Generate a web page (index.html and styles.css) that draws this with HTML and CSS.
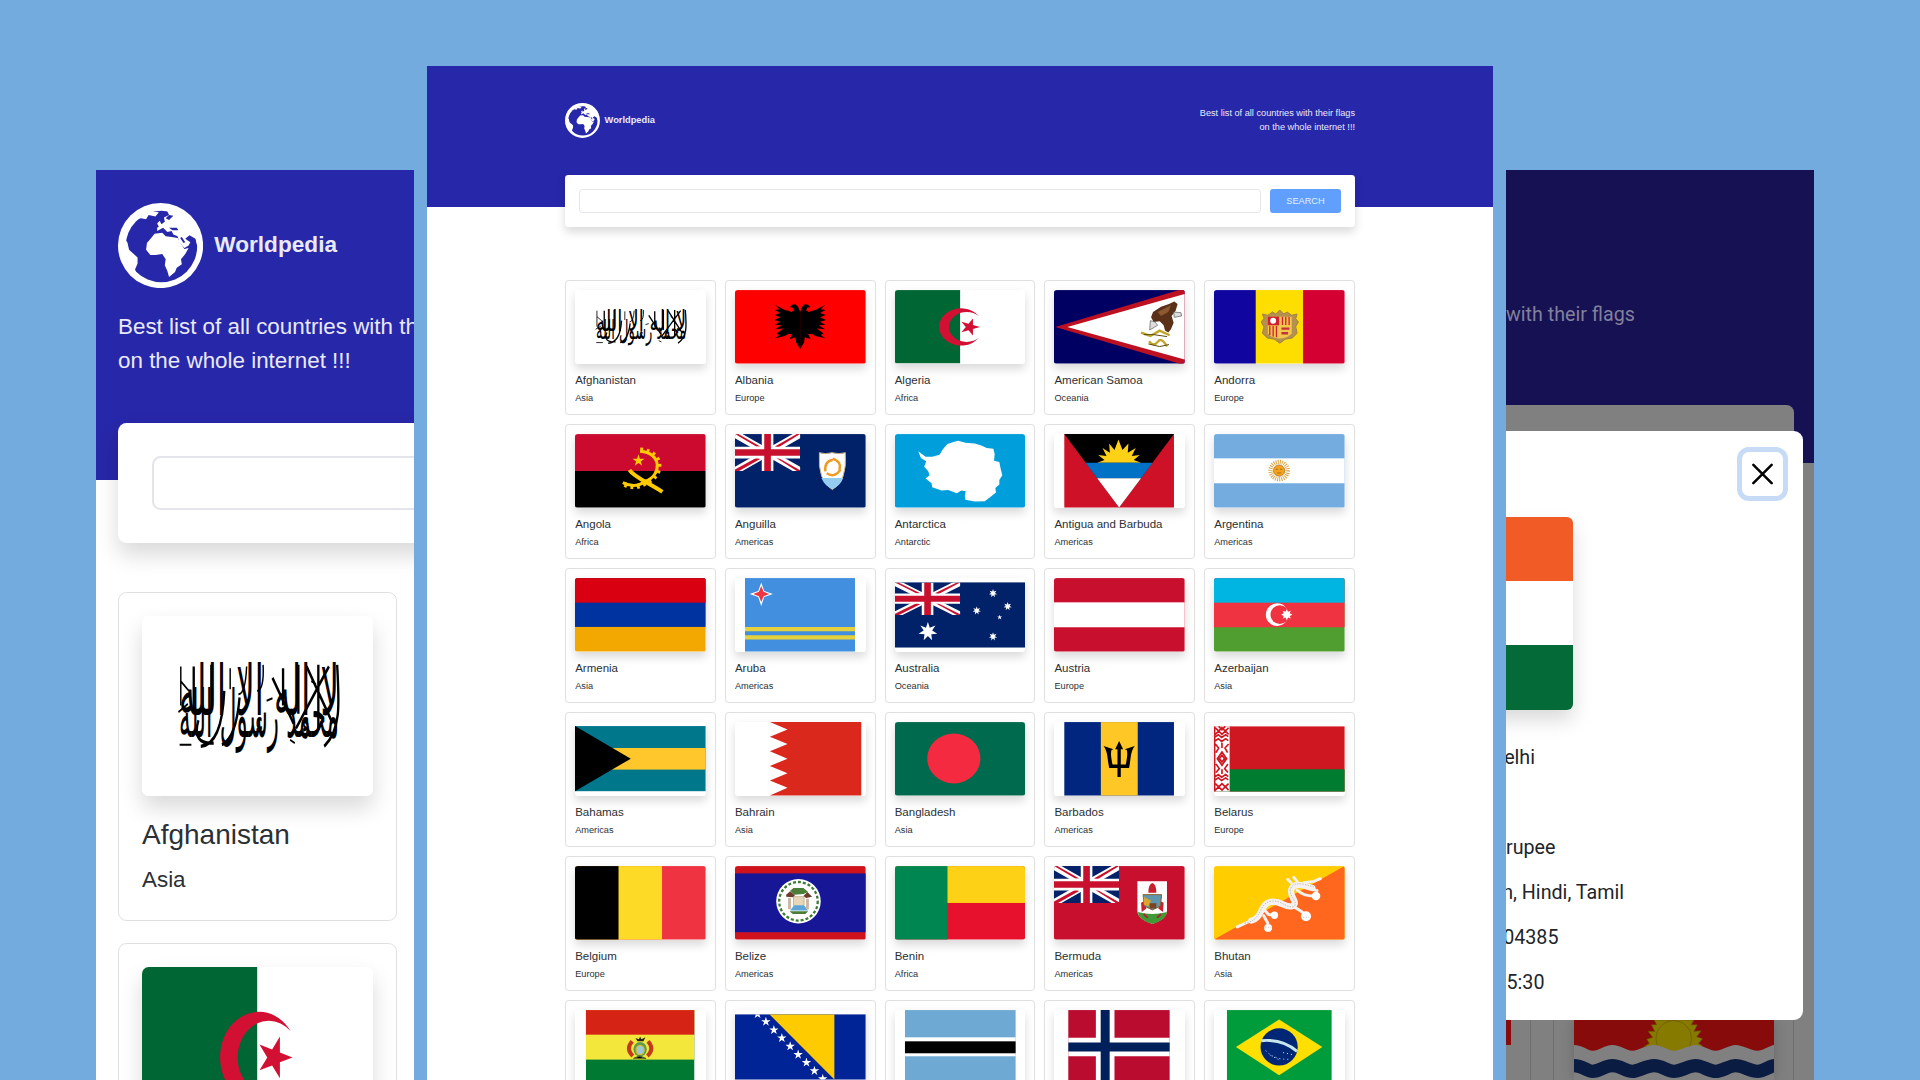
FILE: index.html
```html
<!DOCTYPE html>
<html lang="en">
<head>
<meta charset="utf-8">
<title>Worldpedia</title>
<link rel="stylesheet" href="styles.css">
</head>
<body>
<svg class="sprite" aria-hidden="true">
  <defs>
    <symbol id="globe" viewBox="0 0 100 100">
      <circle cx="50" cy="50" r="50" fill="#fff"/>
      <circle cx="51" cy="51" r="42" fill="#2727a9"/>
      <path fill="#fff" d="M5 40 L11 46 L13 55 L23 64 L23 71 L20 78 L22 84 L10 76 L2 58Z"/>
      <path fill="#fff" d="M22 19 L32 13 L40 10 L48 11 L44 16 L36 14 L33 19 L27 18Z"/>
      <path fill="#fff" d="M48 28 L46 24 L49 21 L51 25 L55 22 L54 17 L60 14 L57 8 L68 8 L84 17 L93 30 L97 44 L93 50 L91 42 L84 38 L79 42 L85 46 L83 50 L78 53 L72 46 L70 39 L65 37 L63 33 L58 34 L53 29 L46 33 L46 29Z"/>
      <path fill="#2727a9" d="M60 29 L69 29 L71 32 L64 32Z M75 40 L79 46 L77 47 L73 41Z M56 18 L60 14 L65 15 L60 20Z"/>
      <path fill="#fff" d="M43 36 L52 35 L56 39 L63 40 L70 41 L74 48 L78 54 L83 53 L79 60 L74 66 L75 72 L69 76 L67 81 L60 87 L58 80 L55 73 L56 66 L52 60 L44 61 L38 61 L33 55 L34 47 L39 41Z"/>
    </symbol>
    <symbol id="star5" viewBox="-50 -50 100 100"><path d="M0-50 L11.2-15.5 L47.6-15.5 L18.2 5.9 L29.4 40.5 L0 19.1 L-29.4 40.5 L-18.2 5.9 L-47.6-15.5 L-11.2-15.5Z"/></symbol>
    <symbol id="star7" viewBox="-50 -50 100 100"><path d="M0-50 L9.8-20.3 L39.1-31.2 L22-5 L48.7 11.1 L17.6 14 L21.7 45 L0 22.5 L-21.7 45 L-17.6 14 L-48.7 11.1 L-22-5 L-39.1-31.2 L-9.8-20.3Z"/></symbol>
    <symbol id="jack" viewBox="0 0 196 110" preserveAspectRatio="none">
      <path stroke="#fff" stroke-width="22" d="M0 0 L196 110 M196 0 L0 110"/>
      <path fill="#c8102e" d="M0 0 L10 0 L76 37 L64 37Z M98 55 L186 110 L196 110 L196 108 L128 70 L98 52Z M196 0 L186 0 L120 37 L130 40Z M0 110 L12 110 L76 74 L66 70 L0 106Z"/>
      <path stroke="#fff" stroke-width="35" d="M98 0V110 M0 55H196"/>
      <path stroke="#c8102e" stroke-width="20" d="M98 0V110 M0 55H196"/>
    </symbol>
    <symbol id="algeria" viewBox="0 0 393 221" preserveAspectRatio="none">
      <rect width="393" height="221" fill="#fff"/><rect width="196" height="221" fill="#006633"/>
      <path fill="#d21034" d="M253 79 A66 56 0 1 0 253 143 A53 45 0 1 1 253 79Z"/>
      <g fill="#d21034" transform="translate(225 111) rotate(90) scale(.54 .62)"><path d="M0-50 L11.2-15.5 L47.6-15.5 L18.2 5.9 L29.4 40.5 L0 19.1 L-29.4 40.5 L-18.2 5.9 L-47.6-15.5 L-11.2-15.5Z"/></g>
    </symbol>
    <symbol id="afghan" viewBox="0 0 393 221" preserveAspectRatio="none">
      <rect width="393" height="221" fill="#fff"/>
      <g class="script">
        <text transform="translate(199 122) scale(1 1.65)" text-anchor="middle" font-size="52" textLength="272" lengthAdjust="spacingAndGlyphs">لا إله إلا الله</text>
        <text transform="translate(199 148) scale(1 1.55)" text-anchor="middle" font-size="52" textLength="272" lengthAdjust="spacingAndGlyphs">محمد رسول الله</text>
      </g>
      <g fill="none" stroke="#000" stroke-width="4">
        <path d="M332 60 C336 110 338 140 310 160 M280 62 L322 128 M318 62 L262 138 M222 76 L258 132 M300 60 V140 M266 60 V120 M240 64 V110 M118 60 V112 M88 62 V118 M140 92 Q136 158 100 160 M96 128 Q84 158 122 156 M166 100 Q160 150 136 158"/>
        <path stroke-width="2.500" d="M66 62 V110 M66 80 L80 92 M62 118 L78 108 M64 158 L84 158 M150 64 V90 M178 62 Q176 96 164 96 M206 60 Q208 90 196 92 M288 80 l8 4 M212 104 l10 -3 M252 152 l8 4"/>
      </g>
    </symbol>
    <path id="eagle-half" d="M196 66 L190 50 L182 43 L172 44 L165 51 L174 53 L178 61 L170 66 L160 62 L150 60 L121 45 L134 58 L120 60 L136 69 L119 75 L136 82 L118 90 L136 95 L120 104 L140 106 L121 118 L146 116 L125 131 L134 135 L120 145 L150 138 L160 132 L172 132 L164 148 L182 142 L184 158 L196 177Z"/>
  </defs>
</svg>

<main class="stage">
  <section class="page phone">
    <header class="hero">
      <div class="brand"><svg class="globe"><use href="#globe"/></svg><strong>Worldpedia</strong></div>
      <p class="tagline">Best list of all countries with their flags<br>on the whole internet !!!</p>
    </header>
    <form class="search"><span class="field"></span></form>
    <div class="grid">
      <article class="card"><div class="flag"><svg viewBox="0 0 393 221" preserveAspectRatio="none"><use href="#afghan" width="393" height="221"/></svg></div><h2>Afghanistan</h2><p>Asia</p></article>
      <article class="card"><div class="flag"><svg viewBox="0 0 393 221" preserveAspectRatio="none"><use href="#algeria" width="393" height="221"/></svg></div></article>
    </div>
  </section>

  <section class="page desktop">
    <header class="hero">
      <div class="brand"><svg class="globe"><use href="#globe"/></svg><strong>Worldpedia</strong></div>
      <p class="tagline">Best list of all countries with their flags<br>on the whole internet !!!</p>
    </header>
    <form class="search"><span class="field"></span><button type="button">SEARCH</button></form>
    <div class="grid">
      <article class="card"><div class="flag"><svg viewBox="0 0 393 221"><use href="#afghan" width="393" height="221"/></svg></div><h2>Afghanistan</h2><p>Asia</p></article>

      <article class="card"><div class="flag"><svg viewBox="0 0 393 221"><rect width="393" height="221" fill="#f00"/><use href="#eagle-half"/><use href="#eagle-half" transform="translate(392 0) scale(-1 1)"/></svg></div><h2>Albania</h2><p>Europe</p></article>

      <article class="card"><div class="flag"><svg viewBox="0 0 393 221"><use href="#algeria" width="393" height="221"/></svg></div><h2>Algeria</h2><p>Africa</p></article>

      <article class="card"><div class="flag"><svg viewBox="0 0 393 221"><rect width="393" height="221" fill="#000063"/><path fill="#bd1021" d="M4 111 L376 0 H393 V221 H376Z"/><path fill="#fff" d="M40 111 L393 12 V209Z"/>
        <path fill="#5a3018" d="M292 82 L298 66 L322 50 L346 42 L362 34 L372 42 L366 62 L354 78 L360 98 L352 118 L344 128 L334 122 L330 106 L318 94 L300 96Z"/><path fill="#8b5a33" d="M312 66 L352 46 L344 66 L322 78Z"/><path fill="#ddd" stroke="#555" stroke-width="2" d="M290 92 L304 96 L312 106 L302 112 L288 120Z M360 66 L382 68 L384 78 L362 82Z"/><path fill="none" stroke="#c0a52c" stroke-width="7" d="M262 128 L290 138 L318 122 L348 136 M286 154 Q300 172 312 156 T340 170"/><path fill="none" stroke="#5a4a10" stroke-width="3" d="M270 134 L300 134 L340 140 M284 162 L318 170 L346 164"/></svg></div><h2>American Samoa</h2><p>Oceania</p></article>

      <article class="card"><div class="flag"><svg viewBox="0 0 393 221"><rect width="126" height="221" fill="#10069f"/><rect x="126" width="142" height="221" fill="#fedd00"/><rect x="268" width="125" height="221" fill="#d50032"/>
        <path fill="#b5914f" stroke="#a38141" stroke-width="3" d="M146 72 L162 76 L176 66 L186 72 L198 60 L210 72 L220 66 L234 76 L250 72 L246 86 L254 96 L246 110 L250 130 L236 144 L214 148 L198 160 L182 148 L160 144 L146 130 L150 110 L142 96 L150 86Z"/><path fill="#f1c84b" d="M162 80h72v50q-10 14-36 16q-26-2-36-16z"/><rect x="162" y="80" width="34" height="26" fill="#d0202e"/><circle cx="178" cy="92" r="9" fill="#fff"/><path stroke="#d0203a" stroke-width="4" d="M206 80v25M216 80v25M226 80v25M168 108v28M178 108v32M188 108v34"/><path stroke="#c5303a" stroke-width="7" d="M203 116h24M203 130h20"/></svg></div><h2>Andorra</h2><p>Europe</p></article>

      <article class="card"><div class="flag"><svg viewBox="0 0 393 221"><rect width="393" height="111" fill="#cc092f"/><rect y="111" width="393" height="110"/><g fill="none" stroke="#ffcb00"><path stroke-width="9" d="M196 52 C262 56 262 124 212 142 C190 158 166 158 144 146"/><path stroke-width="15" stroke-dasharray="8 11" d="M196 48 C268 52 268 126 214 146 C190 162 166 162 142 148"/><path stroke-width="12" d="M164 108 C176 128 220 146 263 174"/></g><use href="#star5" x="172" y="61" width="38" height="38" fill="#ffcb00"/></svg></div><h2>Angola</h2><p>Africa</p></article>

      <article class="card"><div class="flag"><svg viewBox="0 0 393 221"><rect width="393" height="221" fill="#012169"/><use href="#jack" width="196" height="111"/><path fill="#fff" stroke="#c9b58a" stroke-width="3" d="M254 56 Q272 62 292 56 Q314 62 332 56 Q338 142 293 167 Q248 142 254 56Z"/><path fill="#95cdf0" d="M260 132h66q-10 24-33 33q-23-9-33-33z"/><g fill="none" stroke="#ef9a21" stroke-width="7"><path d="M272 112 Q268 82 294 78 M294 74 Q322 84 314 108 M318 106 Q300 134 276 118"/></g></svg></div><h2>Anguilla</h2><p>Americas</p></article>

      <article class="card"><div class="flag"><svg viewBox="0 0 393 221"><rect width="393" height="221" fill="#009fdb"/><path fill="#fff" d="M70 52 L92 68 L112 68 L134 62 L144 46 L158 30 L176 24 L190 20 L212 26 L240 28 L260 34 L276 42 L296 44 L300 60 L298 80 L314 84 L318 104 L323 124 L314 138 L314 152 L302 162 L304 176 L286 190 L270 202 L240 203 L212 198 L210 186 L213 172 L200 170 L186 178 L160 168 L140 170 L112 160 L110 148 L92 134 L104 124 L100 112 L88 98 L94 82 L78 72Z"/></svg></div><h2>Antarctica</h2><p>Antarctic</p></article>

      <article class="card"><div class="flag"><svg viewBox="0 0 393 221"><rect x="31" width="330" height="221" fill="#ce1126"/><path d="M31 0H361L196 221Z"/><path fill="#fcd116" d="M130 86 L152 78 L133 63 L158 66 L146 42 L168 56 L166 28 L182 48 L194 16 L206 48 L224 28 L222 56 L246 42 L234 66 L258 63 L240 78 L262 86Z"/><path fill="#0072c6" d="M95 86H297L262 133H130Z"/><path fill="#fff" d="M130 133H262L196 221Z"/></svg></div><h2>Antigua and Barbuda</h2><p>Americas</p></article>

      <article class="card"><div class="flag"><svg viewBox="0 0 393 221"><rect width="393" height="221" fill="#74acdf"/><rect y="73" width="393" height="75" fill="#fff"/><circle cx="196" cy="110" r="26" fill="none" stroke="#d9a648" stroke-width="13" stroke-dasharray="3 3.2"/><circle cx="196" cy="110" r="17" fill="#f2a31b" stroke="#9b6526" stroke-width="2"/><path fill="none" stroke="#8a5520" stroke-width="2" d="M186 106h7M199 106h7M190 117h12"/></svg></div><h2>Argentina</h2><p>Americas</p></article>

      <article class="card"><div class="flag"><svg viewBox="0 0 393 221"><rect width="393" height="221" fill="#f2a800"/><rect width="393" height="147" fill="#0033a0"/><rect width="393" height="74" fill="#d90012"/></svg></div><h2>Armenia</h2><p>Asia</p></article>

      <article class="card"><div class="flag"><svg viewBox="0 0 393 221"><rect x="30" width="331" height="221" fill="#418fde"/><path fill="#e5d03d" d="M30 147h331v13H30z M30 172h331v13H30z"/><path fill="#fff" d="M79 13 L88 39 L114 48 L88 57 L79 84 L70 57 L44 48 L70 39Z"/><path fill="#ef3340" d="M79 24 L86 41 L103 48 L86 55 L79 72 L72 55 L55 48 L72 41Z"/></svg></div><h2>Aruba</h2><p>Americas</p></article>

      <article class="card"><div class="flag"><svg viewBox="0 0 393 221"><rect y="13" width="393" height="196" fill="#012169"/><use href="#jack" y="13" width="196" height="98"/><g fill="#fff"><use href="#star7" x="70" y="132" width="58" height="58"/><use href="#star7" x="282" y="33" width="26" height="26"/><use href="#star7" x="233" y="85" width="26" height="26"/><use href="#star7" x="326" y="72" width="26" height="26"/><use href="#star5" x="307" y="110" width="16" height="16"/><use href="#star7" x="282" y="163" width="26" height="26"/></g></svg></div><h2>Australia</h2><p>Oceania</p></article>

      <article class="card"><div class="flag"><svg viewBox="0 0 393 221"><rect width="393" height="221" fill="#c8102e"/><rect y="73" width="393" height="75" fill="#fff"/></svg></div><h2>Austria</h2><p>Europe</p></article>

      <article class="card"><div class="flag"><svg viewBox="0 0 393 221"><rect width="393" height="221" fill="#509e2f"/><rect width="393" height="148" fill="#ef3340"/><rect width="393" height="74" fill="#00b5e2"/><circle cx="190" cy="110" r="34" fill="#fff"/><circle cx="198" cy="110" r="28" fill="#ef3340"/><path fill="#fff" d="M219 94l4 7 8-3-3 8 8 4-8 4 3 8-8-3-4 8-4-8-8 3 3-8-8-4 8-4-3-8 8 3z"/></svg></div><h2>Azerbaijan</h2><p>Asia</p></article>

      <article class="card"><div class="flag"><svg viewBox="0 0 393 221"><rect y="12" width="393" height="196" fill="#00778b"/><rect y="78" width="393" height="65" fill="#ffc72c"/><path d="M0 12 L168 110 L0 208Z"/></svg></div><h2>Bahamas</h2><p>Americas</p></article>

      <article class="card"><div class="flag"><svg viewBox="0 0 393 221"><path fill="#da291c" d="M380 0H105L158 22 105 44 158 66 105 88 158 110 105 132 158 154 105 176 158 198 105 221H380Z"/></svg></div><h2>Bahrain</h2><p>Asia</p></article>

      <article class="card"><div class="flag"><svg viewBox="0 0 393 221"><rect width="393" height="221" fill="#006a4e"/><ellipse cx="177" cy="109.500" rx="80" ry="75" fill="#f42a41"/></svg></div><h2>Bangladesh</h2><p>Asia</p></article>

      <article class="card"><div class="flag"><svg viewBox="0 0 393 221"><rect x="31" width="330" height="221" fill="#00267f"/><rect x="141" width="111" height="221" fill="#ffc726"/><path d="M196 57 L208 82 H201 V128 H216 C220 108 222 94 219 84 L213 82 L243 72 C230 88 232 108 226 138 H201 V165 H191 V138 H166 C160 108 162 88 149 72 L179 82 L173 84 C170 94 172 108 176 128 H191 V82 H184Z"/></svg></div><h2>Barbados</h2><p>Americas</p></article>

      <article class="card"><div class="flag"><svg viewBox="0 0 393 221"><rect y="13" width="393" height="196" fill="#ce1720"/><rect y="142" width="393" height="67" fill="#007c30"/><rect y="13" width="47" height="196" fill="#fff"/><g fill="none" stroke="#ce1720" stroke-width="5"><path d="M2 13V209 M4 17L14 27 4 37 M14 13L24 23 34 13 M44 17L34 27 44 37 M14 27l10 10 10-10-10-10z M4 44l9-6 10 8 12-8 8 6M4 56l9-6 10 8 12-8 8 6M4 66l10 12-8 14M44 66L33 78l8 14M24 62V78M24 90l14 20-14 20-14-20z M24 100l8 10-8 10-8-10zM6 126l10 14-10 12M42 126l-10 14 10 12M24 142v14M4 164l9-6 10 8 12-8 8 6M4 174l9-6 10 8 12-8 8 6M4 205L14 195 4 185 M44 205L34 195 44 185 M14 195l10 10 10-10-10-10z"/></g></svg></div><h2>Belarus</h2><p>Europe</p></article>

      <article class="card"><div class="flag"><svg viewBox="0 0 393 221"><rect width="393" height="221" fill="#ef3340"/><rect width="262" height="221" fill="#fdda25"/><rect width="131" height="221"/></svg></div><h2>Belgium</h2><p>Europe</p></article>

      <article class="card"><div class="flag"><svg viewBox="0 0 393 221"><rect width="393" height="221" fill="#d0121c"/><rect y="22" width="393" height="177" fill="#171696"/><circle cx="191" cy="106" r="67" fill="#fff"/><circle cx="191" cy="106" r="58" fill="none" stroke="#3d7a35" stroke-width="7" stroke-dasharray="9 6"/><path fill="#4b7d36" d="M166 74 L176 66 L206 66 L220 78 L206 84 L178 86Z M164 136 L220 136 L212 144 H174Z"/><path fill="#6b3b2c" d="M154 86 L166 76 L180 88 L176 94 L154 92Z M206 90 L218 78 L232 92 L214 96Z"/><path fill="#e8d6b8" stroke="#b49a75" stroke-width="2" d="M176 92 H208 V118 L192 130 L176 118Z"/><path fill="#5da5d8" d="M178 118h30l12 16h-54z"/><path stroke="#cbb9a8" stroke-width="9" d="M164 96V130M218 98V130"/></svg></div><h2>Belize</h2><p>Americas</p></article>

      <article class="card"><div class="flag"><svg viewBox="0 0 393 221"><rect width="393" height="221" fill="#e8112d"/><rect width="393" height="111" fill="#fcd116"/><rect width="158" height="221" fill="#008751"/></svg></div><h2>Benin</h2><p>Africa</p></article>

      <article class="card"><div class="flag"><svg viewBox="0 0 393 221"><rect width="393" height="221" fill="#c8102e"/><rect width="196" height="111" fill="#012169"/><use href="#jack" width="196" height="111"/><path fill="#fff" d="M251 46h89v88q0 26-44 40q-45-14-45-40z"/><path fill="#3f9a35" d="M252 138 Q296 150 340 138 Q338 162 296 174 Q254 162 252 138Z"/><path fill="#c8202e" d="M284 80 Q284 54 296 51 Q308 54 308 80Z M262 110l12-6 4 24-14 10z M318 104l12 6-2 28-14-10z"/><path fill="#5f95ad" stroke="#87602b" stroke-width="3" d="M268 86h56l-4 34-24 12-24-12z"/><path fill="#d9a52e" d="M270 92l22 12-8 18-14-6z"/><path fill="#7b4520" d="M288 112h20v16h-20z"/><path stroke="#b02230" stroke-width="6" d="M270 144l12 12M322 144l-12 12"/></svg></div><h2>Bermuda</h2><p>Americas</p></article>

      <article class="card"><div class="flag"><svg viewBox="0 0 393 221"><rect width="393" height="221" fill="#ffcd00"/><path fill="#ff671f" d="M393 0V221H0Z"/><g fill="none" stroke="#f4f1ee" stroke-linecap="round" stroke-linejoin="round"><path stroke-width="19" d="M112 164 C146 158 138 114 170 108 S214 128 236 120 C256 108 228 96 232 72 Q238 52 268 58 L296 66"/><path stroke-width="9" d="M70 183 L120 160 M150 130 L164 146 L178 148 M150 150 L162 172 M240 122 L262 136 L280 150 M250 72 C262 84 284 90 300 90 M232 50 L222 40 M250 46 L240 34 M270 50 L300 46 L320 38 M282 66 L310 74"/></g><g fill="#fff"><circle cx="163" cy="186" r="12"/><circle cx="182" cy="148" r="11"/><circle cx="277" cy="151" r="15"/><circle cx="307" cy="90" r="13"/></g><path fill="none" stroke="#8e8680" stroke-width="1.500" stroke-dasharray="4 4" d="M92 172 C146 164 134 112 170 106 S214 128 240 122 C256 108 226 96 230 70 Q236 50 268 54 L300 62 M154 184h18M268 154h18"/></svg></div><h2>Bhutan</h2><p>Asia</p></article>

      <article class="card"><div class="flag"><svg viewBox="0 0 393 221"><rect x="33" width="326" height="221" fill="#007a33"/><rect x="33" width="326" height="149" fill="#f4e73c"/><rect x="33" width="326" height="74" fill="#d52316"/><path fill="none" stroke="#c3391c" stroke-width="12" d="M172 94 Q152 118 174 138 M220 94 Q240 118 218 138"/><ellipse cx="196" cy="118" rx="20" ry="22" fill="#5e9c4a"/><ellipse cx="196" cy="120" rx="12" ry="14" fill="#9cc9d8" stroke="#d8b83a" stroke-width="4"/><path fill="#222" d="M182 84l10 4 4-8 4 8 12-6-6 12h-18z"/><path stroke="#4b6b30" stroke-width="4" d="M176 146l18-8 20 8"/></svg></div></article>

      <article class="card"><div class="flag"><svg viewBox="0 0 393 221"><defs><clipPath id="bosnia-clip"><rect y="13" width="393" height="196"/></clipPath></defs><rect y="13" width="393" height="196" fill="#002395"/><path fill="#fecb00" d="M104 13H299V209Z"/><g fill="#fff" clip-path="url(#bosnia-clip)"><use href="#star5" x="53" y="-3" width="30" height="30"/><use href="#star5" x="78" y="20" width="30" height="30"/><use href="#star5" x="102" y="45" width="30" height="30"/><use href="#star5" x="126" y="69" width="30" height="30"/><use href="#star5" x="151" y="94" width="30" height="30"/><use href="#star5" x="175" y="119" width="30" height="30"/><use href="#star5" x="200" y="143" width="30" height="30"/><use href="#star5" x="224" y="168" width="30" height="30"/><use href="#star5" x="249" y="192" width="30" height="30"/></g></svg></div></article>

      <article class="card"><div class="flag"><svg viewBox="0 0 393 221"><rect x="30" width="333" height="221" fill="#6da9d2"/><rect x="30" y="82" width="333" height="57" fill="#fff"/><rect x="30" y="94" width="333" height="36"/></svg></div></article>

      <article class="card"><div class="flag"><svg viewBox="0 0 393 221"><rect x="43" width="305" height="221" fill="#ba0c2f"/><path stroke="#fff" stroke-width="56" d="M154 0V221M43 111H348"/><path stroke="#00205b" stroke-width="27" d="M154 0V221M43 111H348"/></svg></div></article>

      <article class="card"><div class="flag"><svg viewBox="0 0 393 221"><rect x="39" width="315" height="221" fill="#009b3a"/><path fill="#fedf00" d="M66 111 L196 28 L326 111 L196 196Z"/><circle cx="196" cy="111" r="56" fill="#002776"/><path fill="none" stroke="#c8e6ee" stroke-width="9" d="M142 92 Q206 86 250 124"/><path fill="none" stroke="#dce8ff" stroke-width="3" stroke-dasharray="3 9" d="M156 122 Q180 150 226 148 M170 136 L200 152 M208 128 L236 134"/></svg></div></article>
    </div>
  </section>

  <section class="page detail">
    <div class="backdrop-page">
      <header class="hero"><p class="tagline">with their flags</p></header>
      <div class="search"></div>
      <div class="tiles">
        <div class="tile"><span class="tile-flag"></span></div>
        <div class="tile">
          <svg class="kiribati" viewBox="0 0 600 180"><rect width="600" height="180" fill="#870b0b"/><path fill="#877a00" stroke="#5f4d00" stroke-width="1.500" d="M210 80 L226 70 L218 58 L236 52 L222 34 L242 34 L232 14 L248 14 L240 0 H360 L352 14 L370 14 L360 34 L382 32 L368 50 L386 56 L374 70 L388 80Z"/><circle cx="299" cy="55" r="53" fill="#877a00" stroke="#5f4d00" stroke-width="1.500"/>
          <path fill="#808080" d="M0 75 C25 75 40 92 55 92 C80 92 90 75 115 75 S155 92 175 92 S215 75 240 75 S280 92 300 92 S345 75 365 75 S405 92 425 92 S465 75 485 75 S530 92 550 92 S590 75 600 75 V180 H0Z"/><path fill="none" stroke="#0b1c42" stroke-width="40" d="M0 137 C25 137 40 154 55 154 C80 154 90 137 115 137 S155 154 175 154 S215 137 240 137 S280 154 300 154 S345 137 365 137 S405 154 425 154 S465 137 485 137 S530 154 550 154 S590 137 600 137"/></svg>
        </div>
      </div>
    </div>
    <div class="modal">
      <button class="close" type="button" aria-label="Close"><svg viewBox="0 0 20 20"><path d="M1.300 1.300 L18.700 18.700 M18.700 1.300 L1.300 18.700"/></svg></button>
      <div class="modal-flag"><i></i><i></i><i></i></div>
      <ul class="facts">
        <li class="capital">Delhi</li>
        <li class="region"></li>
        <li class="currency">rupee</li>
        <li class="languages">n, Hindi, Tamil</li>
        <li class="population">04385</li>
        <li class="timezone">5:30</li>
      </ul>
    </div>
  </section>
</main>
</body>
</html>
```
FILE: styles.css
```css
* { box-sizing: border-box; margin: 0; padding: 0; }

body {
  width: 1920px;
  height: 1080px;
  overflow: hidden;
  background: #74abde;
  font-family: "Liberation Sans", Arial, sans-serif;
  color: #2b3035;
}

.sprite { display: block; width: 0; height: 0; }

.stage {
  display: flex;
  align-items: flex-end;
  gap: 13px;
  height: 1080px;
  padding-left: 96px;
}

.page { overflow: hidden; background: #fff; flex: none; }

.hero { background: #2727a9; color: #e9e9f8; }
.brand { display: flex; align-items: center; gap: .5em; }
.brand strong { font-size: 1.01em; line-height: 1.5; }
.globe { width: 3.8em; height: 3.8em; display: block; }
.tagline { line-height: 1.5; white-space: nowrap; }

.search {
  position: relative;
  display: flex;
  background: #fff;
  border-radius: .38em;
  box-shadow: 0 .5em 1em rgba(0, 0, 0, .15);
}
.field {
  flex: 1;
  border: 1px solid #e3e5ea;
  border-radius: .38em;
}

.card {
  border: 1px solid #dfdfdf;
  border-radius: .38em;
  padding: 1em;
  background: #fff;
}
.flag {
  background: #fff;
  border-radius: .3em;
  box-shadow: 0 .5em 1em rgba(0, 0, 0, .15);
  margin-bottom: 1em;
}
.flag svg { display: block; width: 100%; height: 100%; border-radius: .3em; }
.card h2 { font-size: 1.25em; font-weight: 400; line-height: 1.2; margin-bottom: .4em; white-space: nowrap; }
.card p { line-height: 1.5; }

.script { font-family: "DejaVu Sans", sans-serif; fill: #000; }

/* Narrow layout */
.phone { width: 318px; height: 910px; font-size: 22.4px; }
.phone .hero { height: 310px; padding: 32.5px 22px 0; }
.phone .brand { margin-bottom: 22.4px; }
.phone .search {
  width: 400px;
  height: 120.5px;
  margin: -57.5px 0 49px 22px;
  padding: 33.5px;
}
.phone .field { border-width: 2px; }
.phone .grid { display: grid; gap: 22.4px; width: 279px; margin-left: 22px; }
.phone .card { border-width: 1.5px; padding: 23px 23px 22.4px; height: 328.5px; }
.phone .flag { height: 180px; }

/* Wide layout */
.desktop { width: 1066px; height: 1014px; font-size: 9.2px; }
.desktop .hero {
  display: flex;
  justify-content: space-between;
  height: 140.5px;
  padding: 36.7px 138px 0;
}
.desktop .brand { height: 35px; }
.desktop .brand strong { padding-top: 1px; }
.desktop .tagline { text-align: right; padding-top: 3.6px; font-size: 9.2px; line-height: 14px; }
.desktop .search {
  height: 52px;
  margin: -32px 138px 53.5px;
  padding: 14px;
  gap: 9px;
}
.desktop .search button {
  width: 71px;
  border: 0;
  border-radius: 3px;
  background: #609ffd;
  color: #e3efff;
  font: 9.2px "Liberation Sans", Arial, sans-serif;
}
.desktop .grid {
  display: grid;
  grid-template-columns: repeat(5, 1fr);
  grid-auto-rows: 135.2px;
  gap: 8.8px;
  margin: 0 138px;
}
.desktop .flag { height: 73.6px; margin-bottom: 10px; }

/* Country dialog */
.detail {
  position: relative;
  width: 308px;
  height: 910px;
  font-family: Roboto, sans-serif;
  font-size: 19.7px;
  background: #808080;
}
.detail .hero { height: 293px; padding-top: 130px; background: #151152; color: #82809c; }
.detail .tagline { line-height: 29px; }
.detail .search {
  height: 115px;
  margin: -58px 20px 0 -20px;
  background: #808080;
  box-shadow: none;
}
.tiles { display: flex; gap: 22px; margin: 419px 20px 0 -200px; }
.tile {
  flex: none;
  width: 241px;
  height: 250px;
  padding-top: 80px;
  padding-left: 20px;
  border: 1px solid #6f6f6f;
}
.tile:first-child { width: 225px; padding-left: 0; }
.tile-flag { display: block; width: 204px; height: 25px; background: #870b0b; }
.kiribati { display: block; width: 200px; height: 60px; box-shadow: 0 0 12px rgba(0, 0, 0, .2); }

.modal {
  position: absolute;
  top: 260.5px;
  left: -20px;
  right: 11px;
  height: 589.5px;
  border-radius: 9px;
  background: #fff;
}
.close {
  display: flex;
  align-items: center;
  justify-content: center;
  width: 51px;
  height: 54px;
  margin: 16.5px 15px 16px auto;
  border: 5px solid #c7dbf6;
  border-radius: 12px;
  background: #fff;
}
.close svg { width: 21px; height: 22px; }
.close path { fill: none; stroke: #000; stroke-width: 2.4; stroke-linecap: round; }
.modal-flag {
  display: flex;
  flex-direction: column;
  width: 87px;
  height: 192.5px;
  border-radius: 6px;
  overflow: hidden;
  box-shadow: 0 10px 20px rgba(0, 0, 0, .15);
}
.modal-flag i { flex: 1; background: #f15b25; }
.modal-flag i:nth-child(2) { background: #fff; }
.modal-flag i:nth-child(3) { background: #046a38; }
.facts { list-style: none; margin-top: 33px; color: #212529; }
.facts li {
  display: flex;
  justify-content: flex-end;
  height: 45px;
  line-height: 29px;
  white-space: nowrap;
}
.capital { padding-right: 268px; }
.currency { padding-right: 247.500px; }
.languages { padding-right: 179px; }
.population { padding-right: 244.500px; }
.timezone { padding-right: 258.500px; }
```
